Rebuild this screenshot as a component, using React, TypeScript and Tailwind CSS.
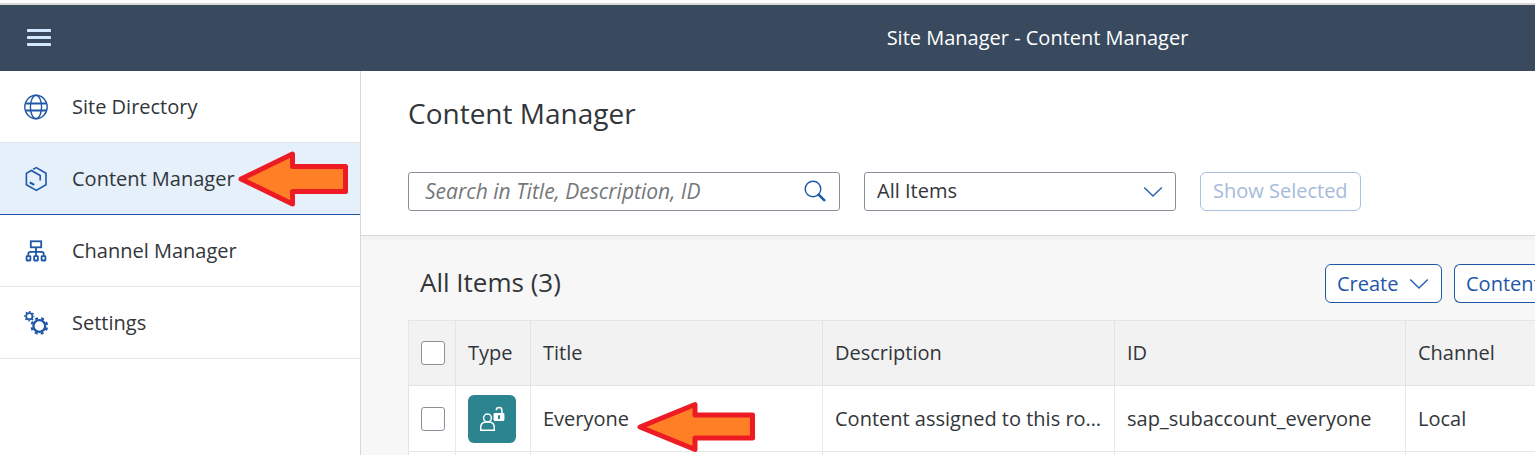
import type { ReactNode } from "react";

type IconProps = { className?: string };

function MenuIcon() {
  return (
    <svg width="24" height="18" viewBox="0 0 24 18" fill="#d1e8ff" aria-hidden="true">
      <rect y="0" width="24" height="3" rx="0.8" />
      <rect y="7" width="24" height="3" rx="0.8" />
      <rect y="14" width="24" height="3" rx="0.8" />
    </svg>
  );
}

function GlobeIcon() {
  return (
    <svg width="24" height="26" viewBox="0 0 24 26" fill="none" stroke="#1f57a8" strokeWidth="1.4" aria-hidden="true">
      <ellipse cx="12" cy="13" rx="11.2" ry="11.7" />
      <ellipse cx="12" cy="13" rx="5.6" ry="11.7" />
      <path d="M1.5 9.5h21M1.5 16.5h21" strokeWidth="1.8" />
    </svg>
  );
}

function HexIcon() {
  return (
    <svg width="24" height="26" viewBox="0 0 24 26" fill="none" stroke="#1f57a8" strokeWidth="1.6" aria-hidden="true">
      <path d="M9 3.4 12.3 1.6 22 7.2v11.6l-9.700 5.600L2.400 18.800V7.400L7.300 4.500l8.900 5v5" />
      <path d="M5.800 16.400l4.400 2.500" strokeWidth="2.200" />
    </svg>
  );
}

function OrgIcon() {
  return (
    <svg width="24" height="24" viewBox="0 0 24 24" fill="none" stroke="#1f57a8" strokeWidth="1.8" aria-hidden="true">
      <rect x="6.800" y="2.300" width="10.400" height="6" />
      <path d="M12 8.300v8.500M4.300 16.800v-2q0-2 2-2h11.400q2 0 2 2v2" />
      <rect x="2.600" y="17.200" width="3.800" height="4.300" rx="0.500" />
      <rect x="10.100" y="17.200" width="3.800" height="4.300" rx="0.500" />
      <rect x="17.600" y="17.200" width="3.800" height="4.300" rx="0.500" />
    </svg>
  );
}

function GearsIcon() {
  return (
    <svg width="24" height="24" viewBox="0 0 24 24" fill="none" stroke="#1f57a8" aria-hidden="true">
      <circle cx="5.300" cy="5.300" r="3.100" strokeWidth="1.700" />
      <circle cx="5.300" cy="5.300" r="4.400" strokeWidth="1.600" strokeDasharray="1.600 1.856" strokeDashoffset="0.800" />
      <circle cx="15.300" cy="15" r="5.900" strokeWidth="2.300" />
      <circle cx="15.300" cy="15" r="7.800" strokeWidth="2.200" strokeDasharray="3 3.126" strokeDashoffset="-1.600" />
    </svg>
  );
}

function SearchIcon() {
  return (
    <svg width="22" height="22" viewBox="0 0 22 22" fill="none" stroke="#1f57a8" aria-hidden="true">
      <circle cx="9" cy="9" r="7.800" strokeWidth="1.400" />
      <path d="M14.600 14.600l5.600 5.600" strokeWidth="2.600" strokeLinecap="round" />
    </svg>
  );
}

function ChevronIcon({ className }: IconProps) {
  return (
    <svg className={className} width="20" height="12" viewBox="0 0 20 12" fill="none" stroke="#2a62ae" strokeWidth="1.500" aria-hidden="true">
      <path d="M1.200 1.500 10 10l8.800-8.500" />
    </svg>
  );
}

function RoleIcon() {
  return (
    <svg width="26" height="26" viewBox="0 0 26 26" fill="none" stroke="#fff" strokeWidth="1.500" aria-hidden="true">
      <circle cx="8.500" cy="12" r="3.900" />
      <path d="M1.700 24.300v-2.600q0-4.900 4.600-5.600h4.400q4.600.7 4.600 5.600v2.600z" />
      <rect x="15.300" y="7.800" width="9.400" height="6.400" rx="0.600" fill="#fff" />
      <path d="M17.300 4.200q0-2.600 2.800-2.600t2.800 2.600v4" />
      <path d="M20 9.300v3.600" stroke="#2c8490" strokeWidth="2" />
    </svg>
  );
}

function ArrowMark({ className }: IconProps) {
  return (
    <svg className={className} viewBox="0 0 110 58" fill="#ff7f27" stroke="#ed1c24" strokeWidth="5" strokeLinejoin="round" aria-hidden="true">
      <path d="M3 29 54.500 4v12.500h53v25h-53V54z" />
    </svg>
  );
}

function RowArrowMark({ className }: IconProps) {
  return (
    <svg className={className} viewBox="0 0 118 52" fill="#ff7f27" stroke="#ed1c24" strokeWidth="5" strokeLinejoin="round" aria-hidden="true">
      <path d="M3 26 58 3.500V14h57.500v23H58v11.500z" />
    </svg>
  );
}

type NavItemProps = { icon: ReactNode; label: string; active?: boolean };

function NavItem({ icon, label, active }: NavItemProps) {
  return (
    <li>
      <a
        href="#"
        aria-current={active ? "page" : undefined}
        className={
          active
            ? "relative flex h-[72px] items-center gap-6 border-b border-[#1f57a8] bg-[#e5f0fa] px-6"
            : "relative flex h-[72px] items-center gap-6 border-b border-[#e5e5e5] px-6"
        }
      >
        <span className="flex w-6 shrink-0 justify-center pt-px">{icon}</span>
        <span>{label}</span>
        {active && <ArrowMark className="absolute top-[7px] left-[238px] h-[58px] w-[110px]" />}
      </a>
    </li>
  );
}

const boxClass = "block size-6 appearance-none rounded-[3px] border border-[#89919a] bg-white";
const headClass = "border-r border-[#e3e3e3] px-3 text-left font-normal";
const cellClass = "border-r border-[#e8e8e8] px-3";

export default function App() {
  return (
    <div className="overflow-hidden bg-white pt-[3px] pb-3 font-['Open_Sans',sans-serif] text-[20px] leading-7 text-[#32363a]">
      <header className="flex h-[68px] items-center border-t-2 border-[#d9d9d9] bg-[#394a5f] px-[27px]">
        <button type="button" aria-label="Menu">
          <MenuIcon />
        </button>
        <div className="flex-1 pl-[516px] text-center whitespace-nowrap text-white">Site Manager - Content Manager</div>
      </header>
      <div className="flex h-[384px] overflow-hidden">
        <nav className="w-[361px] shrink-0 border-r border-[#d9d9d9]">
          <ul>
            <NavItem icon={<GlobeIcon />} label="Site Directory" />
            <NavItem icon={<HexIcon />} label="Content Manager" active />
            <NavItem icon={<OrgIcon />} label="Channel Manager" />
            <NavItem icon={<GearsIcon />} label="Settings" />
          </ul>
        </nav>
        <main className="min-w-0 flex-1 bg-[#f7f7f7]">
          <section className="border-b border-[#d9d9d9] bg-white pt-6 pb-6 pl-[47px]">
            <h1 className="text-[28px] leading-[37px]">Content Manager</h1>
            <div className="mt-10 flex gap-6">
              <div className="flex h-[39px] w-[432px] items-center rounded-[3px] border border-[#89919a] pr-[13px] pb-0.5 pl-4">
                <input
                  type="text"
                  aria-label="Search in Title, Description, ID"
                  placeholder="Search in Title, Description, ID"
                  className="min-w-0 flex-1 text-[21px] outline-none placeholder:text-[#74777a] placeholder:italic"
                />
                <button type="button" aria-label="Search">
                  <SearchIcon />
                </button>
              </div>
              <div className="relative w-[312px]">
                <select
                  aria-label="Filter items"
                  className="h-[39px] w-full appearance-none rounded-[3px] border border-[#89919a] px-3 pb-0.5"
                >
                  <option>All Items</option>
                </select>
                <ChevronIcon className="pointer-events-none absolute top-[14px] right-[13px]" />
              </div>
              <button type="button" disabled className="h-[39px] rounded-md border border-[#a9c1de] px-3 pb-0.5 text-[#a5bbdc]">
                Show Selected
              </button>
            </div>
          </section>
          <section className="border-t-4 border-[#f3f3f3] pt-6 pl-[47px]">
            <div className="flex items-center justify-between pl-3">
              <h2 className="pb-1 text-[26px]">All Items (3)</h2>
              <div className="-mr-3 flex shrink-0 gap-3 text-[#1f57a8]">
                <button
                  type="button"
                  className="flex h-[39px] w-[117px] items-center justify-between rounded-md border border-[#1f57a8] bg-white pr-3 pl-[11px]"
                >
                  Create
                  <ChevronIcon />
                </button>
                <button type="button" className="h-[39px] w-[93px] rounded-md border border-r-0 border-[#1f57a8] bg-white pl-[11px] text-left">
                  Content
                </button>
              </div>
            </div>
            <table className="mt-[17px] w-full table-fixed border-separate border-spacing-0 border-t border-l border-[#e5e5e5]">
              <colgroup>
                <col className="w-[47px]" />
                <col className="w-[75px]" />
                <col className="w-[292px]" />
                <col className="w-[292px]" />
                <col className="w-[291px]" />
                <col />
              </colgroup>
              <thead>
                <tr className="h-[65px] bg-[#f2f2f2] *:border-b">
                  <th className={headClass}>
                    <input type="checkbox" aria-label="Select all" className={boxClass} />
                  </th>
                  <th className={headClass}>Type</th>
                  <th className={headClass}>Title</th>
                  <th className={headClass}>Description</th>
                  <th className={headClass}>ID</th>
                  <th className="border-[#e3e3e3] px-3 text-left font-normal">Channel</th>
                </tr>
              </thead>
              <tbody>
                <tr className="h-[66px] bg-white *:border-b">
                  <td className={cellClass}>
                    <input type="checkbox" aria-label="Select Everyone" className={boxClass} />
                  </td>
                  <td className={cellClass}>
                    <span className="flex size-12 items-center justify-center rounded-md bg-[#2c8490]">
                      <RoleIcon />
                    </span>
                  </td>
                  <td className="relative border-r border-[#e8e8e8] px-3">
                    Everyone
                    <RowArrowMark className="absolute top-[15px] left-[106px] h-[52px] w-[118px]" />
                  </td>
                  <td className={cellClass}>
                    <span className="block whitespace-nowrap">Content assigned to this ro…</span>
                  </td>
                  <td className={cellClass}>sap_subaccount_everyone</td>
                  <td className="border-[#e8e8e8] px-3">Local</td>
                </tr>
                <tr className="h-3 bg-white">
                  <td className={cellClass} />
                  <td className={cellClass} />
                  <td className={cellClass} />
                  <td className={cellClass} />
                  <td className={cellClass} />
                  <td />
                </tr>
              </tbody>
            </table>
          </section>
        </main>
      </div>
    </div>
  );
}
